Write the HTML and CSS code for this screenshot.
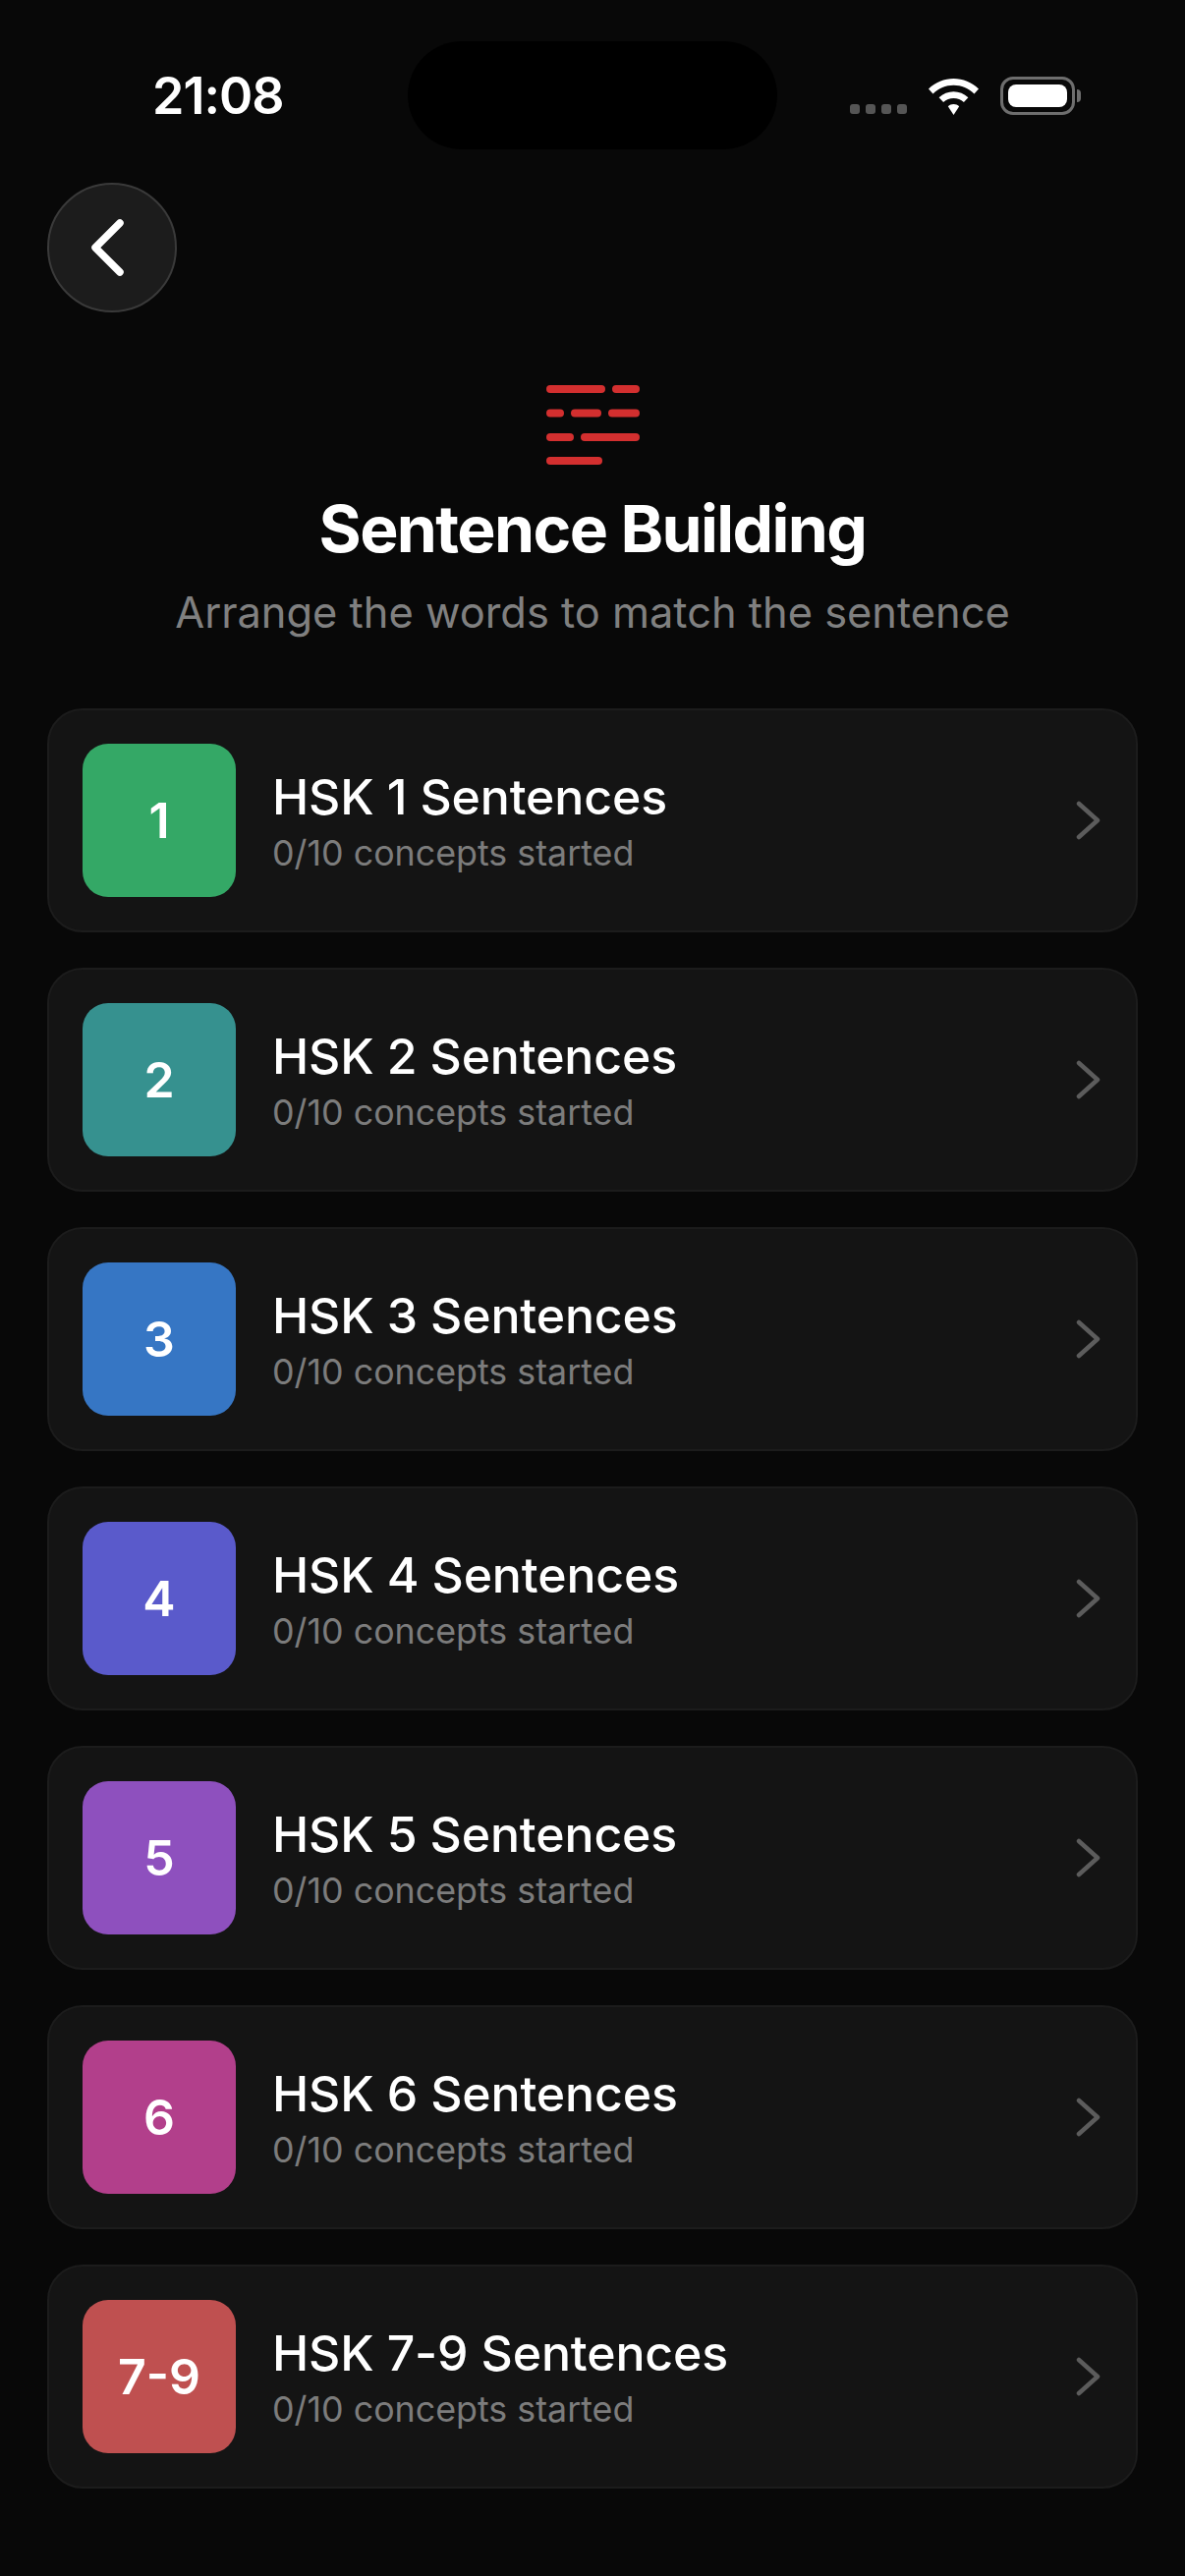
FILE: index.html
```html
<!DOCTYPE html>
<html lang="en">
  <head>
    <meta charset="UTF-8" />
    <meta name="viewport" content="width=device-width, initial-scale=1.0" />
    <title>Sentence Building</title>
    <link rel="stylesheet" href="styles.css">
  </head>
  <body>
    <div class="island"></div>

    <div class="status-bar">
      <span class="time">21:08</span>
      <div class="status-icons">
        <div class="signal"><span></span><span></span><span></span><span></span></div>
        <svg class="wifi" width="51" height="37" viewBox="0 0 51 37">
          <path d="M25.5 0C35 0 44 3.8 51 10.500L46.500 15.500C40.800 10 33.400 6.800 25.500 6.800C17.600 6.800 10.200 10 4.500 15.500L0 10.500C7 3.800 16 0 25.500 0Z" fill="#fff" />
          <path d="M25.500 13.200C31 13.200 36.300 15.300 40.400 19.200L35.900 24.100C33 21.500 29.300 20 25.500 20C21.700 20 18 21.500 15.100 24.100L10.600 19.200C14.700 15.300 20 13.200 25.500 13.200Z" fill="#fff" />
          <path d="M25.500 26C27.600 26 29.600 26.800 31.200 28.200L25.500 37L19.800 28.200C21.400 26.800 23.400 26 25.500 26Z" fill="#fff" />
        </svg>
        <div class="battery"><div class="battery-fill"></div></div>
      </div>
    </div>

    <button class="back-btn">
      <svg width="40" height="60" viewBox="0 0 40 60">
        <path d="M33 5L8 30L33 55" fill="none" stroke="#fff" stroke-width="7.500" stroke-linecap="round" stroke-linejoin="round" />
      </svg>
    </button>

    <div class="header">
      <svg class="logo" width="95" height="82" viewBox="0 0 95 82">
        <g stroke="#d32f2f" stroke-width="8" stroke-linecap="round">
          <path d="M4 4H56M71 4H91" />
          <path d="M4 28.500H14M29 28.500H52M67 28.500H91" />
          <path d="M4 53H24M39 53H91" />
          <path d="M4 77H53" />
        </g>
      </svg>
      <h1>Sentence Building</h1>
      <p>Arrange the words to match the sentence</p>
    </div>

    <div class="levels">
      <div class="level">
        <div class="badge green">1</div>
        <div class="level-text">
          <h2>HSK 1 Sentences</h2>
          <p>0/10 concepts started</p>
        </div>
        <svg class="chevron" width="26" height="40" viewBox="0 0 26 40"><path d="M3 3L22 20L3 37" fill="none" stroke="#5c5c5c" stroke-width="4.500" stroke-linecap="round" stroke-linejoin="round" /></svg>
      </div>
      <div class="level">
        <div class="badge teal">2</div>
        <div class="level-text">
          <h2>HSK 2 Sentences</h2>
          <p>0/10 concepts started</p>
        </div>
        <svg class="chevron" width="26" height="40" viewBox="0 0 26 40"><path d="M3 3L22 20L3 37" fill="none" stroke="#5c5c5c" stroke-width="4.500" stroke-linecap="round" stroke-linejoin="round" /></svg>
      </div>
      <div class="level">
        <div class="badge blue">3</div>
        <div class="level-text">
          <h2>HSK 3 Sentences</h2>
          <p>0/10 concepts started</p>
        </div>
        <svg class="chevron" width="26" height="40" viewBox="0 0 26 40"><path d="M3 3L22 20L3 37" fill="none" stroke="#5c5c5c" stroke-width="4.500" stroke-linecap="round" stroke-linejoin="round" /></svg>
      </div>
      <div class="level">
        <div class="badge indigo">4</div>
        <div class="level-text">
          <h2>HSK 4 Sentences</h2>
          <p>0/10 concepts started</p>
        </div>
        <svg class="chevron" width="26" height="40" viewBox="0 0 26 40"><path d="M3 3L22 20L3 37" fill="none" stroke="#5c5c5c" stroke-width="4.500" stroke-linecap="round" stroke-linejoin="round" /></svg>
      </div>
      <div class="level">
        <div class="badge purple">5</div>
        <div class="level-text">
          <h2>HSK 5 Sentences</h2>
          <p>0/10 concepts started</p>
        </div>
        <svg class="chevron" width="26" height="40" viewBox="0 0 26 40"><path d="M3 3L22 20L3 37" fill="none" stroke="#5c5c5c" stroke-width="4.500" stroke-linecap="round" stroke-linejoin="round" /></svg>
      </div>
      <div class="level">
        <div class="badge pink">6</div>
        <div class="level-text">
          <h2>HSK 6 Sentences</h2>
          <p>0/10 concepts started</p>
        </div>
        <svg class="chevron" width="26" height="40" viewBox="0 0 26 40"><path d="M3 3L22 20L3 37" fill="none" stroke="#5c5c5c" stroke-width="4.500" stroke-linecap="round" stroke-linejoin="round" /></svg>
      </div>
      <div class="level">
        <div class="badge red">7-9</div>
        <div class="level-text">
          <h2>HSK 7-9 Sentences</h2>
          <p>0/10 concepts started</p>
        </div>
        <svg class="chevron" width="26" height="40" viewBox="0 0 26 40"><path d="M3 3L22 20L3 37" fill="none" stroke="#5c5c5c" stroke-width="4.500" stroke-linecap="round" stroke-linejoin="round" /></svg>
      </div>
    </div>
  </body>
</html>
```

FILE: styles.css
```css
* {
  box-sizing: border-box;
}

body {
  font-family: Inter, "Liberation Sans", sans-serif;
  background-color: #080808;
  color: #fff;
  margin: 0;
  padding: 0 48px;
  height: 2622px;
  overflow: hidden;
}

.island {
  position: absolute;
  left: 415px;
  top: 42px;
  width: 376px;
  height: 110px;
  border-radius: 55px;
  background-color: #000;
}

.status-bar {
  display: flex;
  justify-content: space-between;
  align-items: flex-end;
  height: 117px;
  padding: 0 64px 0 107px;
}

.time {
  font-size: 52px;
  font-weight: 600;
  line-height: 60px;
  letter-spacing: -1px;
  position: relative;
  top: 11px;
}

.status-icons {
  display: flex;
  align-items: flex-end;
  gap: 22px;
}

.signal {
  display: flex;
  gap: 6px;
  padding-bottom: 1px;
}

.signal span {
  width: 10px;
  height: 10px;
  border-radius: 3px;
  background-color: #555;
}

.battery {
  position: relative;
  width: 76px;
  height: 39px;
  padding: 5px;
  border: 3px solid #6e6e6e;
  border-radius: 13px;
}

.battery::after {
  content: "";
  position: absolute;
  right: -9px;
  top: 10px;
  width: 4px;
  height: 13px;
  border-radius: 0 4px 4px 0;
  background-color: #6e6e6e;
}

.battery-fill {
  height: 100%;
  border-radius: 8px;
  background-color: #fff;
}

.back-btn {
  display: flex;
  align-items: center;
  justify-content: center;
  width: 132px;
  height: 132px;
  margin-top: 69px;
  padding: 0 11px 0 0;
  background-color: #1c1c1c;
  border: 2px solid #3a3a3a;
  border-radius: 50%;
}

.header {
  display: flex;
  flex-direction: column;
  align-items: center;
  margin-top: 74px;
}

.logo {
  display: block;
}

.header h1 {
  margin: 25px 0 0;
  font-size: 66px;
  font-weight: 650;
  line-height: 78px;
  letter-spacing: -1.600px;
}

.header p {
  margin: 19px 0 0;
  font-size: 43.400px;
  line-height: 54px;
  color: #808080;
}

.levels {
  display: flex;
  flex-direction: column;
  gap: 36px;
  margin-top: 71px;
}

.level {
  display: flex;
  align-items: center;
  height: 228px;
  padding: 0 34px;
  background-color: #141414;
  border: 2px solid #1c1c1c;
  border-radius: 36px;
}

.badge {
  display: flex;
  align-items: center;
  justify-content: center;
  flex-shrink: 0;
  width: 156px;
  height: 156px;
  border-radius: 26px;
  font-size: 50px;
  font-weight: 600;
}

.green { background-color: #34a866; }
.teal { background-color: #36918f; }
.blue { background-color: #3676c4; }
.indigo { background-color: #5a5acb; }
.purple { background-color: #8e50be; }
.pink { background-color: #b23f8b; }
.red { background-color: #bf5050; }

.level-text {
  flex: 1;
  margin-left: 37px;
}

.level-text h2 {
  margin: 0;
  font-size: 50px;
  font-weight: 550;
  line-height: 60px;
  letter-spacing: -0.150px;
}

.level-text p {
  margin: 5px 0 0;
  font-size: 35.800px;
  line-height: 44px;
  color: #7c7c7c;
}

.chevron {
  margin-right: 1px;
}
```
